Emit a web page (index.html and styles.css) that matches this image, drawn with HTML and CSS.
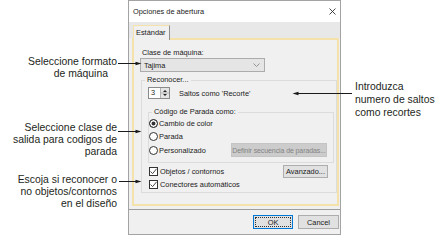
FILE: index.html
```html
<!DOCTYPE html>
<html lang="es">

<head>
  <meta charset="UTF-8">
  <meta name="viewport" content="width=device-width, initial-scale=1.0">
  <title>Opciones de abertura</title>
  <link rel="stylesheet" href="styles.css">
</head>

<body>
  <div class="sheet">
    <!-- Notas de la izquierda -->
    <div class="notes-left">
      <p class="note note-machine">Seleccione formato<br><span class="indent">de máquina</span></p>
      <p class="note note-stops">Seleccione clase de<br>salida para codigos de<br>parada</p>
      <p class="note note-objects">Escoja si reconocer o<br>no objetos/contornos<br>en el diseño</p>
    </div>

    <!-- Diálogo -->
    <div class="dialog">
      <div class="titlebar">
        <span>Opciones de abertura</span>
        <svg class="close" width="7" height="7" viewBox="0 0 7 7">
          <path d="M0.5 0.5L6.5 6.5M6.5 0.5L0.5 6.5" stroke="#333" stroke-width="0.9" fill="none" />
        </svg>
      </div>

      <div class="tabstrip">
        <span class="tab">Estándar</span>
      </div>

      <div class="panel">
        <div class="field-label">Clase de máquina:</div>
        <div class="combo">
          <span>Tajima</span>
          <svg width="7" height="4" viewBox="0 0 7 4">
            <path d="M0.5 0.5L3.5 3.5L6.5 0.5" stroke="#8a8a8a" stroke-width="0.9" fill="none" />
          </svg>
        </div>

        <fieldset class="group group-recognize">
          <legend>Reconocer...</legend>

          <div class="spin-row">
            <div class="spin">
              <span class="spin-value">3</span>
              <span class="spin-arrows">
                <svg width="8" height="10" viewBox="0 0 8 10">
                  <path d="M2 4L4 2L6 4Z M2 6L4 8L6 6Z" fill="#222" />
                  <path d="M0 5H8" stroke="#b0b0b0" stroke-width="1" />
                </svg>
              </span>
            </div>
            <span class="spin-text">Saltos como 'Recorte'</span>
          </div>

          <fieldset class="group group-stops">
            <legend>Código de Parada como:</legend>
            <div class="option-row">
              <span class="radio checked"></span><span>Cambio de color</span>
            </div>
            <div class="option-row">
              <span class="radio"></span><span>Parada</span>
            </div>
            <div class="option-row option-row-tall">
              <span class="radio"></span><span>Personalizado</span>
              <button class="btn btn-define" disabled>Definir secuencia de paradas...</button>
            </div>
          </fieldset>

          <div class="check-row check-row-first">
            <span class="check">
              <svg width="9" height="9" viewBox="0 0 9 9">
                <path d="M1.5 4.5L3.6 6.6L7.6 1.8" stroke="#333" stroke-width="0.9" fill="none" />
              </svg>
            </span>
            <span>Objetos / contornos</span>
            <button class="btn btn-advanced">Avanzado...</button>
          </div>
          <div class="check-row">
            <span class="check">
              <svg width="9" height="9" viewBox="0 0 9 9">
                <path d="M1.5 4.5L3.6 6.6L7.6 1.8" stroke="#333" stroke-width="0.9" fill="none" />
              </svg>
            </span>
            <span>Conectores automáticos</span>
          </div>
        </fieldset>
      </div>

      <div class="dialog-foot">
        <button class="btn btn-ok">OK</button>
        <button class="btn btn-cancel">Cancel</button>
      </div>
    </div>

    <!-- Nota de la derecha -->
    <div class="notes-right">
      <p class="note">Introduzca<br>numero de saltos<br>como recortes</p>
    </div>

    <!-- Líneas de las notas -->
    <svg class="leaders" width="444" height="249" viewBox="0 0 444 249">
      <g stroke="#1a1a1a" stroke-width="1">
        <path d="M118 63.5H138" />
        <path d="M118 131.5H138" />
        <path d="M119 181.5H138" />
        <path d="M352 93.5H296" />
      </g>
      <g fill="#1a1a1a">
        <path d="M141.5 63.5L135.5 61.8V65.2Z" />
        <path d="M141.5 131.5L135.5 129.8V133.2Z" />
        <path d="M141.5 181.5L135.5 179.8V183.2Z" />
        <path d="M292.5 93.5L298.5 91.8V95.2Z" />
      </g>
    </svg>
  </div>
</body>

</html>
```

FILE: styles.css
```css
:root {
  --ink: #231f20;
  --text: #1a1a1a;
  --face: #f0f0f0;
  --band: #e8e8e8;
  --cream: #f5e2ab;
  --edge: #a3a3a3;
  --button: #e1e1e1;
  --button-border: #adadad;
}

body {
  margin: 0;
  background: #fff;
  font-family: "Liberation Sans", Arial, sans-serif;
}

.sheet {
  position: relative;
  width: 444px;
  height: 249px;
  display: grid;
  grid-template-columns: 128px 213px 1fr;
  align-items: start;
}

/* Notas */

.note {
  margin: 0;
  font-size: 10.4px;
  line-height: 12px;
  color: var(--ink);
}

.notes-left {
  text-align: right;
  padding-right: 11px;
}

.note-machine {
  margin-top: 56px;
}

.note-machine .indent {
  padding-right: 9px;
}

.note-stops {
  margin-top: 42px;
}

.note-objects {
  margin-top: 16px;
}

.notes-right {
  padding-left: 14px;
  padding-top: 81px;
}

.notes-right .note {
  line-height: 12.8px;
}

.leaders {
  position: absolute;
  left: 0;
  top: 0;
  pointer-events: none;
}

/* Diálogo */

.dialog {
  box-sizing: border-box;
  height: 235px;
  border: 1px solid var(--edge);
  background: var(--face);
  font-size: 7.4px;
  color: var(--text);
  display: flex;
  flex-direction: column;
}

.titlebar {
  height: 21px;
  background: #fff;
  display: flex;
  align-items: center;
  justify-content: space-between;
  padding: 0 4px 0 4px;
}

.close {
  margin-top: -1px;
}

.tabstrip {
  height: 16px;
  background: var(--band);
  display: flex;
  align-items: flex-end;
  padding-left: 4px;
}

.tab {
  position: relative;
  z-index: 1;
  box-sizing: border-box;
  height: 15px;
  margin-bottom: -2px;
  padding: 2px 3px 0 2px;
  background: var(--face);
  border-top: 1px solid var(--cream);
  border-left: 1px solid var(--cream);
  border-right: 1px solid #8f8f8f;
  line-height: 10px;
}

.panel {
  box-sizing: border-box;
  height: 168px;
  margin: 0 1px 0 3px;
  border: 2px solid var(--cream);
  background: var(--face);
}

.field-label {
  margin: 8px 0 0 8px;
  line-height: 10px;
}

.combo {
  box-sizing: border-box;
  width: 125px;
  height: 14px;
  margin-left: 6px;
  padding: 0 4px 0 3px;
  background: #e5e5e5;
  border: 1px solid #acacac;
  display: flex;
  align-items: center;
  justify-content: space-between;
}

/* Grupos */

.group {
  margin: 0;
  padding: 0;
  min-width: 0;
  border: 1px solid #dcdcdc;
}

.group legend {
  padding: 0 2px;
  margin-left: 3px;
  line-height: 10px;
}

.group-recognize {
  box-sizing: border-box;
  width: 196px;
  margin: 3px 0 0 7px;
  padding: 2px 0 1px 0;
}

.spin-row {
  height: 12px;
  display: flex;
  align-items: center;
  margin-left: 6px;
}

.spin {
  box-sizing: border-box;
  width: 22px;
  height: 12px;
  border: 1px solid #8a8a8a;
  background: #fff;
  display: flex;
}

.spin-value {
  flex: 1;
  padding-left: 2px;
  line-height: 10px;
}

.spin-arrows {
  width: 8px;
  background: #e4e4e4;
  border-left: 1px solid #b0b0b0;
  display: flex;
}

.spin-text {
  margin-left: 9px;
}

.group-stops {
  box-sizing: border-box;
  width: 186px;
  margin: 8px 0 0 6px;
  padding: 0 0 5px 0;
}

.option-row {
  height: 13px;
  display: flex;
  align-items: center;
}

.option-row-tall {
  height: 14px;
}

.radio {
  box-sizing: border-box;
  width: 9px;
  height: 9px;
  margin-right: 1px;
  border: 1px solid #333;
  border-radius: 50%;
  background: #fff;
}

.radio.checked {
  background: #333;
  box-shadow: inset 0 0 0 1.5px #fff;
}

.check-row {
  height: 13px;
  display: flex;
  align-items: center;
  margin-left: 7px;
}

.check-row-first {
  height: 14px;
  margin-top: 1px;
}

.check {
  box-sizing: border-box;
  width: 9px;
  height: 9px;
  margin-right: 2px;
  border: 1px solid #333;
  background: #fff;
  display: flex;
}

.check svg {
  margin: -1px;
}

/* Botones */

.btn {
  box-sizing: border-box;
  height: 14px;
  padding: 0;
  font-family: inherit;
  font-size: 7.4px;
  color: var(--text);
  background: var(--button);
  border: 1px solid var(--button-border);
  border-radius: 0;
  white-space: nowrap;
  overflow: hidden;
}

.btn-define {
  width: 96px;
  margin: 0 6px 0 auto;
  font-size: 7px;
  letter-spacing: -0.1px;
  background: #cccccc;
  border-color: #c4c4c4;
  color: #838383;
}

.btn-advanced {
  width: 45px;
  height: 13px;
  margin: 0 8px 0 auto;
}

.dialog-foot {
  margin-top: 3px;
  border-top: 1px solid #9d9d9d;
  padding: 5px 1px 0 0;
  display: flex;
  justify-content: flex-end;
  gap: 5px;
}

.btn-ok {
  width: 40px;
  border-color: #0078d7;
  outline: 1px dotted #333;
  outline-offset: -3px;
}

.btn-cancel {
  width: 41px;
}
```
